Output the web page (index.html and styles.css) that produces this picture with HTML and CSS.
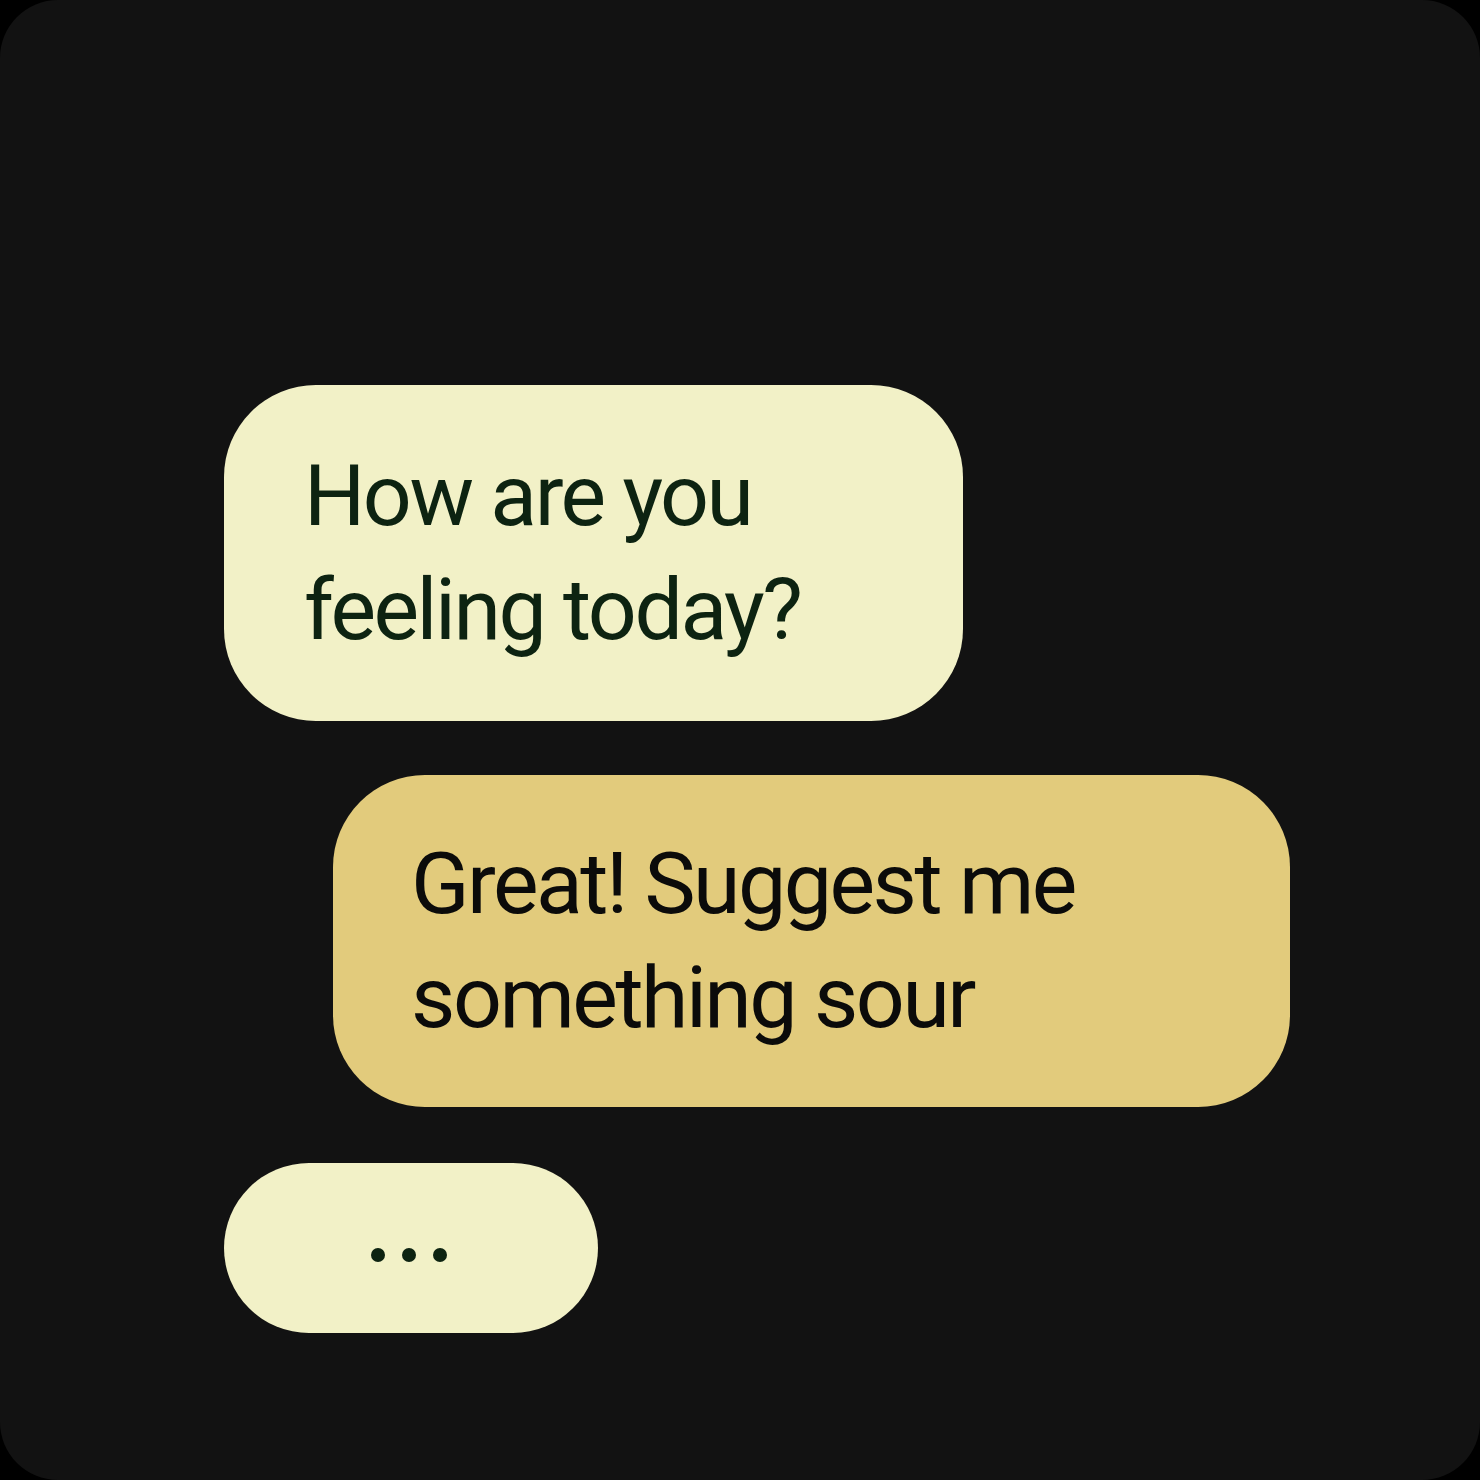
FILE: index.html
```html
<!DOCTYPE html>
<html lang="en">
<head>
<meta charset="utf-8">
<title>Chat</title>
<link rel="stylesheet" href="styles.css">
</head>
<body>
<main class="card">
  <div class="thread">
    <div class="bubble bubble-in">
      <p class="msg">How are you<br>feeling today?</p>
    </div>
    <div class="bubble bubble-out">
      <p class="msg">Great! Suggest me<br>something sour</p>
    </div>
    <div class="bubble bubble-typing">
      <span class="dot"></span><span class="dot"></span><span class="dot"></span>
    </div>
  </div>
</main>
</body>
</html>
```

FILE: styles.css
```css
html, body {
  margin: 0;
  padding: 0;
  background: #000;
}
.card {
  width: 1480px;
  height: 1480px;
  background: #121212;
  border-radius: 58px;
  box-sizing: border-box;
  padding: 385px 0 0 224px;
  font-family: Roboto, Inter, "Noto Sans", sans-serif;
}
.thread {
  display: flex;
  flex-direction: column;
  align-items: flex-start;
}
.bubble {
  box-sizing: border-box;
}
.msg {
  margin: 0;
  font-size: 86px;
  line-height: 114px;
  letter-spacing: -2.5px;
}
.bubble-in {
  width: 739px;
  height: 336px;
  background: #f2f1c7;
  color: #0d2311;
  border-radius: 92px;
  padding: 54px 0 0 80px;
}
.bubble-out {
  margin-top: 54px;
  margin-left: 109px;
  width: 957px;
  height: 332px;
  background: #e2cb7c;
  color: #0b0b0a;
  border-radius: 92px;
  padding: 52px 0 0 78px;
}
.bubble-typing {
  margin-top: 56px;
  width: 374px;
  height: 170px;
  background: #f2f1c7;
  border-radius: 85px;
  display: flex;
  align-items: center;
  justify-content: center;
  gap: 17px;
  padding-top: 14px;
  padding-right: 4px;
}
.dot {
  width: 14px;
  height: 14px;
  border-radius: 50%;
  background: #0d2311;
}
```
